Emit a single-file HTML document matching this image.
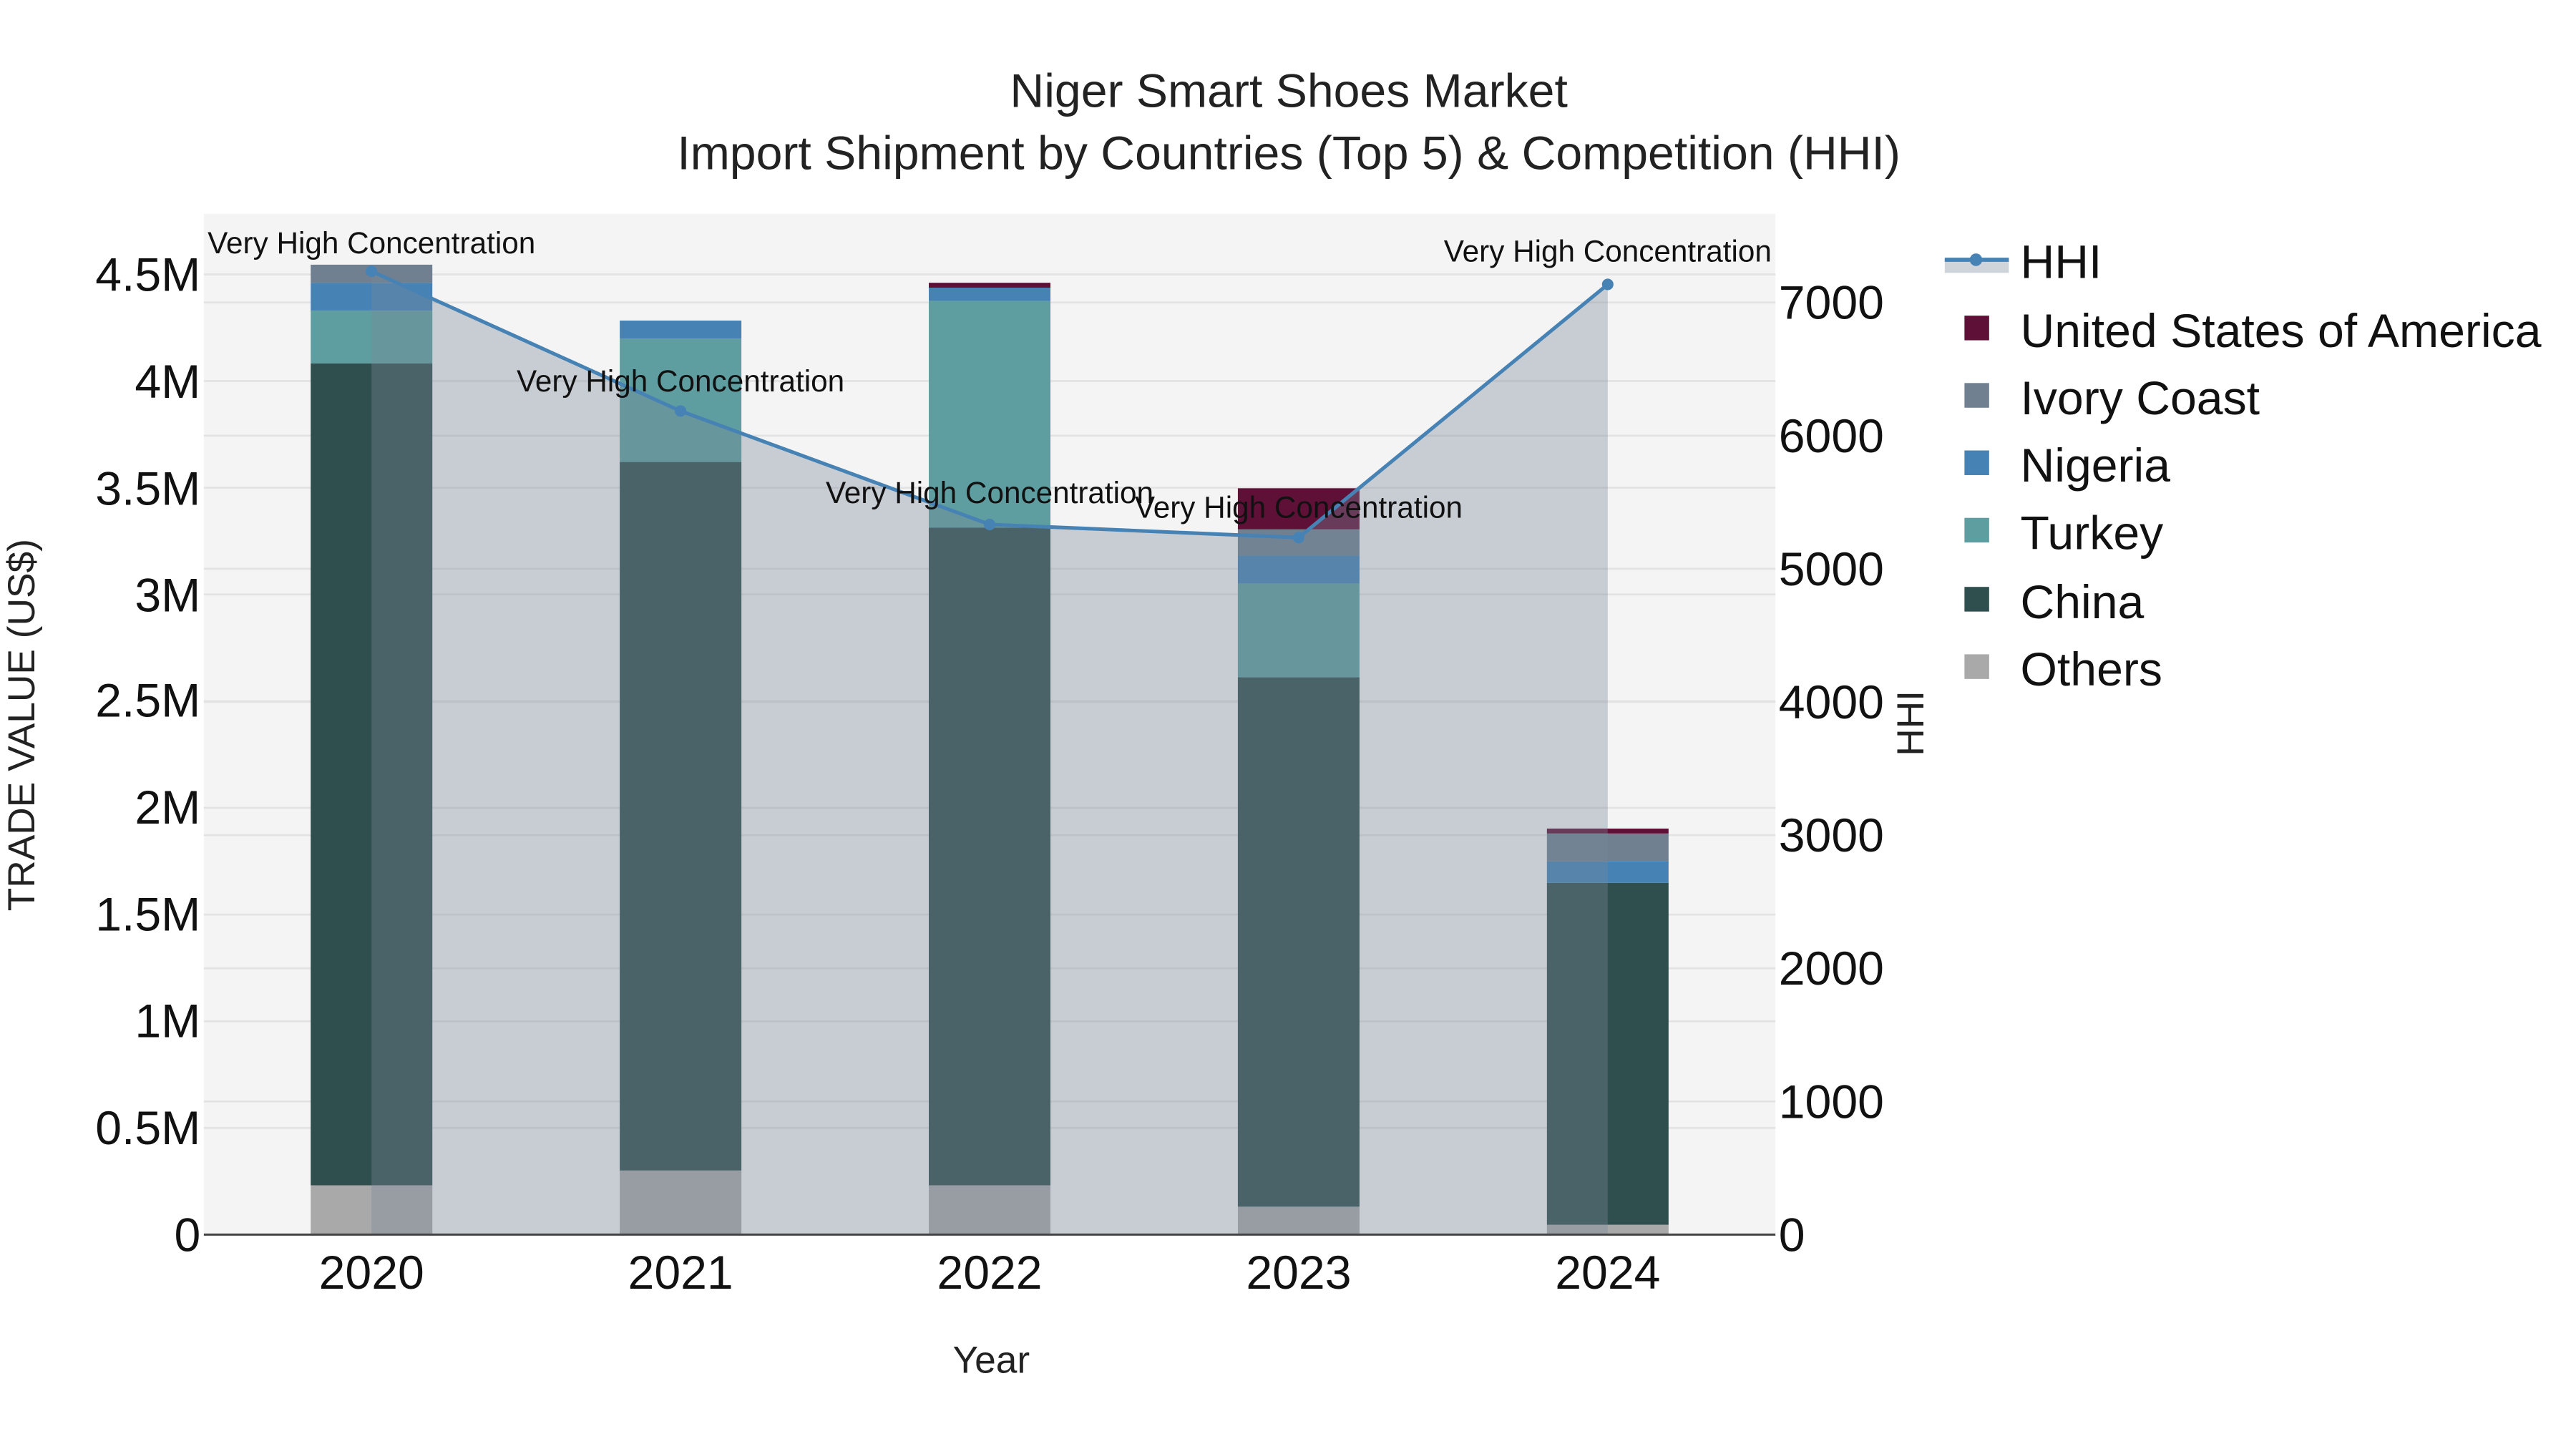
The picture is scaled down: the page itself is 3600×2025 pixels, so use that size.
<!DOCTYPE html>
<html><head><meta charset="utf-8"><style>
html,body{margin:0;padding:0;background:#fff;}
svg{display:block;font-family:"Liberation Sans",Arial,sans-serif;}
</style></head><body>
<svg width="3600" height="2025" viewBox="0 0 1567 881.4" preserveAspectRatio="none" xmlns="http://www.w3.org/2000/svg">
<rect x="0" y="0" width="1567" height="882" fill="#fff"/>
<rect x="124" y="130" width="956" height="621" fill="#f4f4f4"/>
<g stroke="#e3e3e3" stroke-width="1.2">
<line x1="124" x2="1080" y1="686.1" y2="686.1"/><line x1="124" x2="1080" y1="621.2" y2="621.2"/>
<line x1="124" x2="1080" y1="556.3" y2="556.3"/><line x1="124" x2="1080" y1="491.4" y2="491.4"/>
<line x1="124" x2="1080" y1="426.5" y2="426.5"/><line x1="124" x2="1080" y1="361.6" y2="361.6"/>
<line x1="124" x2="1080" y1="296.7" y2="296.7"/><line x1="124" x2="1080" y1="231.8" y2="231.8"/>
<line x1="124" x2="1080" y1="166.9" y2="166.9"/>
<line x1="124" x2="1080" y1="670" y2="670"/><line x1="124" x2="1080" y1="589" y2="589"/>
<line x1="124" x2="1080" y1="508" y2="508"/><line x1="124" x2="1080" y1="427" y2="427"/>
<line x1="124" x2="1080" y1="346" y2="346"/><line x1="124" x2="1080" y1="265" y2="265"/>
<line x1="124" x2="1080" y1="184" y2="184"/>
</g>
<g>
<rect x="189" y="721" width="74" height="30" fill="#a9a9a9"/>
<rect x="189" y="221" width="74" height="500" fill="#2f4f4f"/>
<rect x="189" y="189" width="74" height="32" fill="#5f9ea0"/>
<rect x="189" y="172" width="74" height="17" fill="#4682b4"/>
<rect x="189" y="161" width="74" height="11" fill="#708090"/>
<rect x="377" y="712" width="74" height="39" fill="#a9a9a9"/>
<rect x="377" y="281" width="74" height="431" fill="#2f4f4f"/>
<rect x="377" y="206" width="74" height="75" fill="#5f9ea0"/>
<rect x="377" y="195" width="74" height="11" fill="#4682b4"/>
<rect x="565" y="721" width="74" height="30" fill="#a9a9a9"/>
<rect x="565" y="321" width="74" height="400" fill="#2f4f4f"/>
<rect x="565" y="183" width="74" height="138" fill="#5f9ea0"/>
<rect x="565" y="175" width="74" height="8" fill="#4682b4"/>
<rect x="565" y="172" width="74" height="3" fill="#5f1036"/>
<rect x="753" y="734" width="74" height="17" fill="#a9a9a9"/>
<rect x="753" y="412" width="74" height="322" fill="#2f4f4f"/>
<rect x="753" y="355" width="74" height="57" fill="#5f9ea0"/>
<rect x="753" y="338" width="74" height="17" fill="#4682b4"/>
<rect x="753" y="322" width="74" height="16" fill="#708090"/>
<rect x="753" y="297" width="74" height="25" fill="#5f1036"/>
<rect x="941" y="745" width="74" height="6" fill="#a9a9a9"/>
<rect x="941" y="537" width="74" height="208" fill="#2f4f4f"/>
<rect x="941" y="524" width="74" height="13" fill="#4682b4"/>
<rect x="941" y="507" width="74" height="17" fill="#708090"/>
<rect x="941" y="504" width="74" height="3" fill="#5f1036"/>
</g>
<polygon points="226,751 226,165 414,250 602,319 790,327 978,173 978,751" fill="rgba(119,136,153,0.36)"/>
<line x1="124" x2="1080" y1="751" y2="751" stroke="#444" stroke-width="1.3"/>
<polyline points="226,165 414,250 602,319 790,327 978,173" fill="none" stroke="#4682b4" stroke-width="2.2"/>
<g fill="#4682b4"><circle cx="226" cy="165" r="3.5"/><circle cx="414" cy="250" r="3.5"/><circle cx="602" cy="319" r="3.5"/><circle cx="790" cy="327" r="3.5"/><circle cx="978" cy="173" r="3.5"/></g>
<g font-size="18.4" fill="#111" text-anchor="middle">
<text x="226" y="154">Very High Concentration</text>
<text x="414" y="238">Very High Concentration</text>
<text x="602" y="306">Very High Concentration</text>
<text x="790" y="315">Very High Concentration</text>
<text x="978" y="159">Very High Concentration</text>
</g>
<g font-size="28.8" fill="#111" text-anchor="end">
<text x="122" y="761">0</text><text x="122" y="696">0.5M</text><text x="122" y="631">1M</text>
<text x="122" y="566">1.5M</text><text x="122" y="501">2M</text><text x="122" y="436">2.5M</text>
<text x="122" y="372">3M</text><text x="122" y="307">3.5M</text><text x="122" y="242">4M</text>
<text x="122" y="177">4.5M</text>
</g>
<g font-size="28.8" fill="#111" text-anchor="start">
<text x="1082" y="761">0</text><text x="1082" y="680">1000</text><text x="1082" y="599">2000</text>
<text x="1082" y="518">3000</text><text x="1082" y="437">4000</text><text x="1082" y="356">5000</text>
<text x="1082" y="275">6000</text><text x="1082" y="194">7000</text>
</g>
<g font-size="28.8" fill="#111" text-anchor="middle">
<text x="226" y="784">2020</text><text x="414" y="784">2021</text><text x="602" y="784">2022</text>
<text x="790" y="784">2023</text><text x="978" y="784">2024</text>
</g>
<text x="603" y="835" font-size="23.2" fill="#222" text-anchor="middle">Year</text>
<text transform="translate(21,441) rotate(-90)" font-size="23.2" fill="#222" text-anchor="middle">TRADE VALUE (US$)</text>
<text transform="translate(1170,440) rotate(-90)" font-size="23.2" fill="#222" text-anchor="middle">HHI</text>
<g font-size="28.8" fill="#222" text-anchor="middle">
<text x="784" y="65">Niger Smart Shoes Market</text>
<text x="784" y="103">Import Shipment by Countries (Top 5) &amp; Competition (HHI)</text>
</g>
<rect x="1183" y="158" width="39" height="8" fill="rgba(119,136,153,0.36)"/>
<line x1="1183" x2="1222" y1="158" y2="158" stroke="#4682b4" stroke-width="2.5"/>
<circle cx="1202" cy="158" r="3.8" fill="#4682b4"/>
<rect x="1195" y="192" width="15" height="15" fill="#5f1036"/>
<rect x="1195" y="233" width="15" height="15" fill="#708090"/>
<rect x="1195" y="274" width="15" height="15" fill="#4682b4"/>
<rect x="1195" y="315" width="15" height="15" fill="#5f9ea0"/>
<rect x="1195" y="357" width="15" height="15" fill="#2f4f4f"/>
<rect x="1195" y="398" width="15" height="15" fill="#a9a9a9"/>
<g font-size="28.8" fill="#111">
<text x="1229" y="169">HHI</text>
<text x="1229" y="211">United States of America</text>
<text x="1229" y="252">Ivory Coast</text>
<text x="1229" y="293">Nigeria</text>
<text x="1229" y="334">Turkey</text>
<text x="1229" y="376">China</text>
<text x="1229" y="417">Others</text>
</g>
</svg>
</body></html>
